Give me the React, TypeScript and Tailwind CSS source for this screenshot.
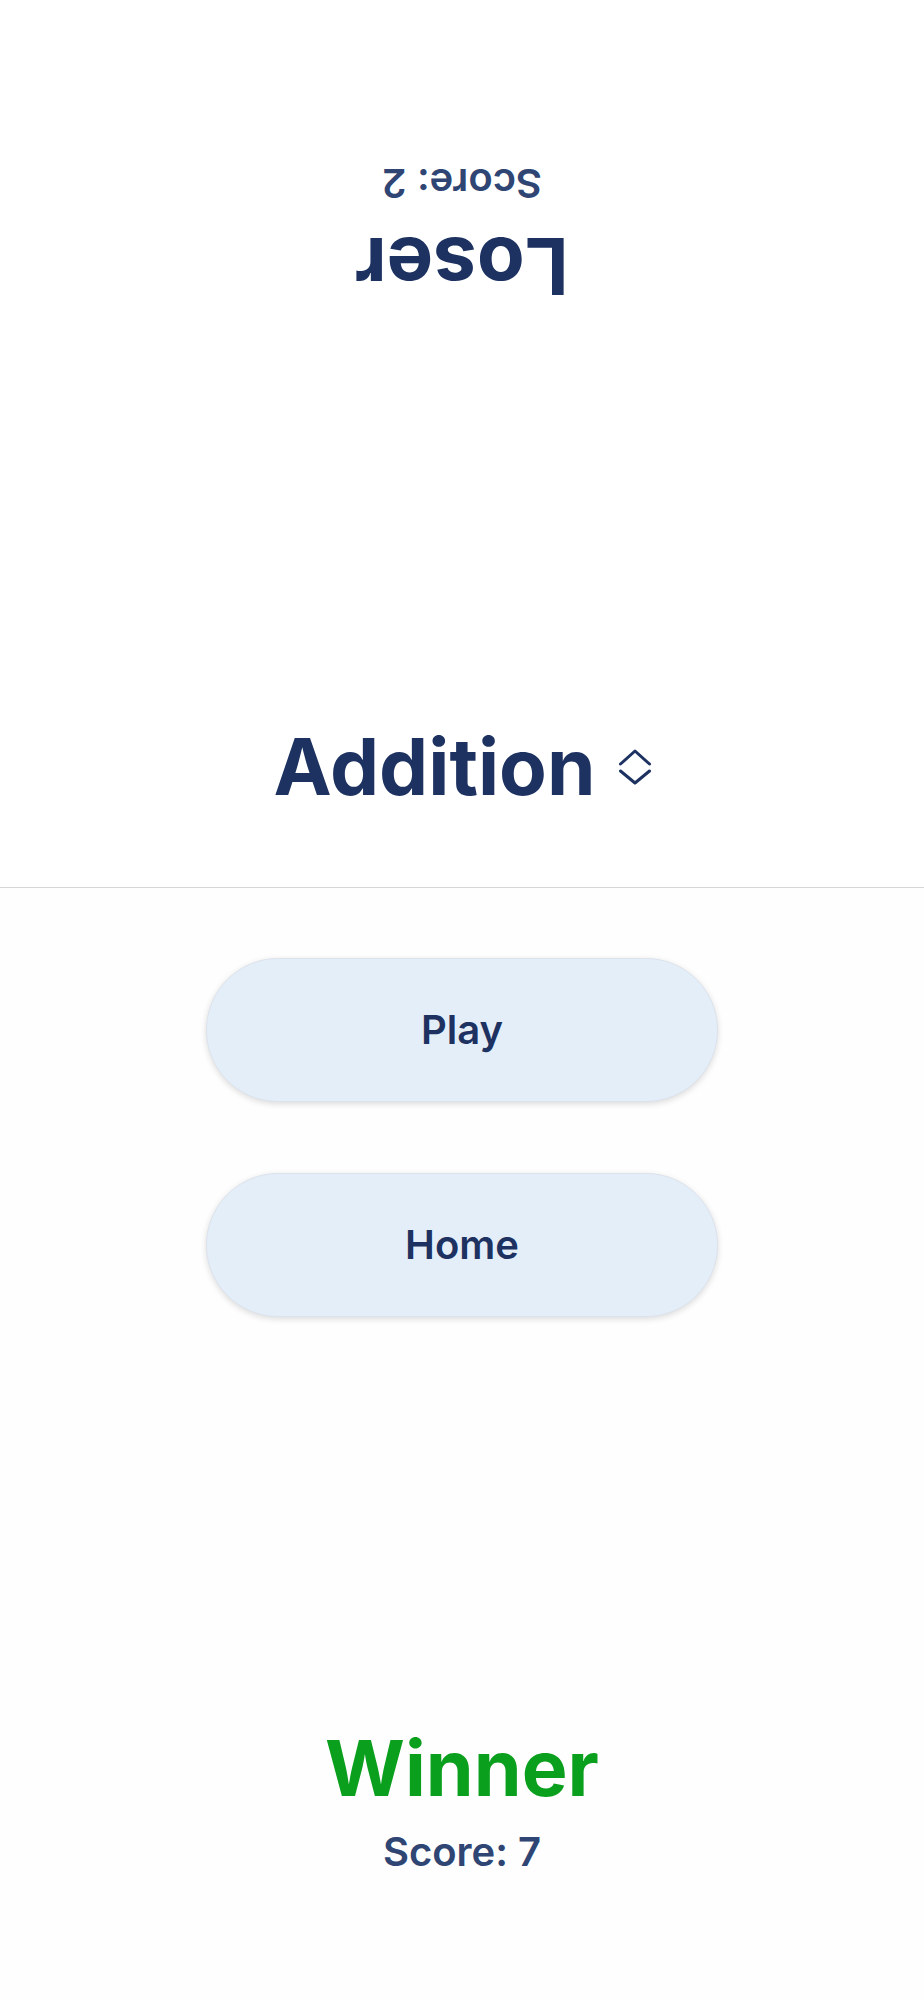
import React from "react";

function UpDownIcon() {
  return (
    <svg width="32" height="36" viewBox="0 0 32 36" fill="none" stroke="#1d3261" strokeWidth="3" strokeLinecap="round" strokeLinejoin="round">
      <path d="M1.5 15 L16 2 L30.5 15" />
      <path d="M1.5 22 L16 34 L30.5 22" />
    </svg>
  );
}

function PillButton({ label }: { label: string }) {
  return (
    <button className="w-[512px] h-[144px] rounded-full bg-[#e4eef9] border border-[#dde3ec] shadow-[0_2px_6px_rgba(0,0,0,0.14)] text-[40px] leading-[1.2] font-semibold text-[#1d3261]">
      {label}
    </button>
  );
}

export default function App() {
  return (
    <div className="w-full h-[2000px] flex flex-col bg-white" style={{ fontFamily: "Inter, 'Noto Sans', sans-serif" }}>
      <div className="h-[887px] flex flex-col items-center pt-[159px] pb-[73px] bg-white">
        <div className="rotate-180 flex flex-col items-center gap-[12px]">
          <div className="text-[78px] leading-[1.2] font-bold text-[#1d3261]">Loser</div>
          <div className="text-[40px] leading-[1.2] font-semibold text-[#2f4574]">Score: 2</div>
        </div>
        <div className="mt-auto flex items-center justify-center gap-[23px]">
          <div className="text-[78px] leading-[1.2] font-bold text-[#1d3261]">Addition</div>
          <UpDownIcon />
        </div>
      </div>
      <div className="flex-1 border-t border-[#d6d6d6] bg-[#fefefe] flex flex-col items-center pt-[70px] pb-[124px]">
        <div className="flex flex-col items-center gap-[71px]">
          <PillButton label="Play" />
          <PillButton label="Home" />
        </div>
        <div className="mt-auto flex flex-col items-center gap-[14px]">
          <div className="text-[77px] leading-[1.2] font-bold text-[#0b9f1e]">Winner</div>
          <div className="text-[40px] leading-[1.2] font-semibold text-[#2f4574]">Score: 7</div>
        </div>
      </div>
    </div>
  );
}
